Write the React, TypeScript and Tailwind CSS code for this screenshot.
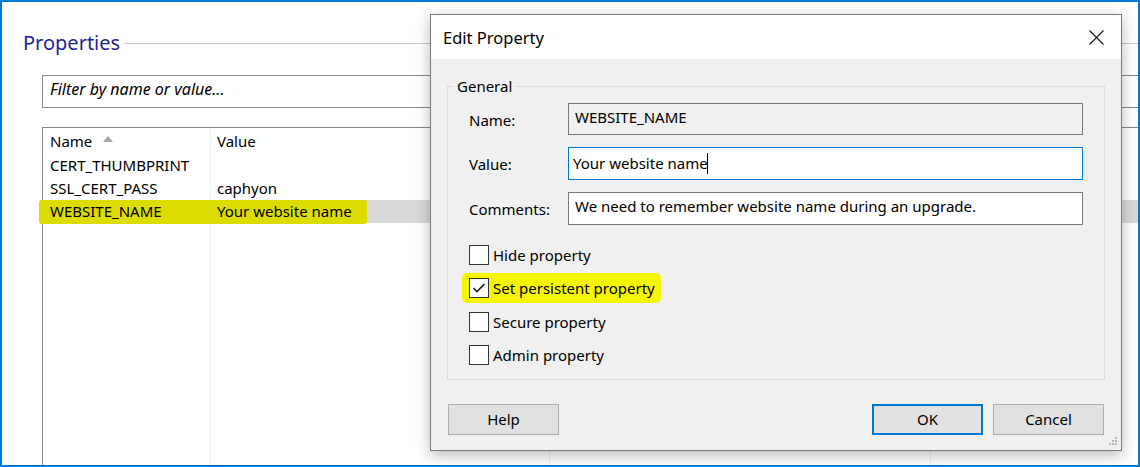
import React from "react";

const font = { fontFamily: '"Noto Sans", "Open Sans", sans-serif' };

function Check({ checked }: { checked?: boolean }) {
  return (
    <div className="w-[20px] h-[20px] border border-[#333333] bg-white flex items-center justify-center shrink-0">
      {checked && (
        <svg width="14" height="12" viewBox="0 0 14 12">
          <polyline points="1.5,6 5,9.5 12.5,2" fill="none" stroke="#1a1a1a" strokeWidth="1.6" />
        </svg>
      )}
    </div>
  );
}

export default function App() {
  return (
    <div
      className="w-[1140px] h-[467px] border-2 border-[#0078d7] bg-white relative overflow-hidden text-[15px] text-black"
      style={font}
    >
      {/* Background page */}
      <div className="flex flex-col h-full">
        <div className="flex items-center pl-[21px] pt-[27px] h-[54px]">
          <span className="text-[20px] leading-[26px] text-[#1f1f9c] pr-[4px]">Properties</span>
          <div className="flex-1 h-px bg-[#c8c8c8] mt-[2px]" />
        </div>
        <div className="ml-[40px] mt-[19px] h-[33px] border-l border-t border-b border-[#828790] flex items-center pl-[7px] pb-[6px]">
          <span className="italic text-[16px] leading-none">Filter by name or value...</span>
        </div>
        <div className="ml-[40px] mt-[19px] flex-1 border-l border-t border-[#828790] relative">
          <div className="absolute top-0 bottom-0 left-[167px] w-px bg-[#e8eef8]" />
          <div className="absolute top-0 bottom-0 left-[506px] w-px bg-[#e8eef8]" />
          <div className="absolute top-0 bottom-0 left-[887px] w-px bg-[#e8eef8]" />
          <div className="flex h-[26px] items-center">
            <div className="w-[168px] pl-[7px] flex items-center">
              <span>Name</span>
              <svg width="10" height="6" viewBox="0 0 10 6" className="ml-[11px] -mt-[4px]">
                <polygon points="5,0 10,6 0,6" fill="#a8a8a0" />
              </svg>
            </div>
            <div className="pl-[6px]">Value</div>
          </div>
          <div className="flex h-[23px] items-center">
            <div className="w-[168px] pl-[7px]">CERT_THUMBPRINT</div>
          </div>
          <div className="flex h-[23px] items-center">
            <div className="w-[168px] pl-[7px]">SSL_CERT_PASS</div>
            <div className="pl-[6px]">caphyon</div>
          </div>
          <div className="relative flex h-[23px] items-center bg-[#d9d9d9]">
            <div className="absolute -left-[4px] top-0 h-[24px] w-[328px] rounded-[3px] bg-[#dcdc00]" />
            <div className="relative w-[168px] pl-[7px]">WEBSITE_NAME</div>
            <div className="relative pl-[6px]">Your website name</div>
          </div>
        </div>
      </div>

      {/* Dialog */}
      <div className="absolute left-[428px] top-[12px] w-[692px] h-[437px] border border-[#7a7a7a] bg-[#f0f0f0] flex flex-col shadow-[0_4px_14px_rgba(0,0,0,0.28)]">
        <div className="h-[44px] bg-white flex items-center justify-between pl-[12px] pr-[17px] shrink-0">
          <span className="text-[16.5px] pt-[2px]">Edit Property</span>
          <svg width="15" height="15" viewBox="0 0 15 15">
            <path d="M0.5 0.5 L14.5 14.5 M14.5 0.5 L0.5 14.5" stroke="#111" strokeWidth="1.1" />
          </svg>
        </div>
        <fieldset className="mx-[16px] mt-[18px] h-[303px] border border-[#dcdcdc] p-0">
          <legend className="ml-[6px] px-[3px] leading-[18px]">General</legend>
          <div className="flex flex-col mt-[8px] px-[21px]">
            <div className="flex items-center h-[32px]">
              <span className="w-[99px] pt-[3px]">Name:</span>
              <div className="flex-1 h-[32px] border border-[#7a7a7a] bg-[#f0f0f0] pl-[6px] flex items-start pt-[2px]">
                WEBSITE_NAME
              </div>
            </div>
            <div className="flex items-center h-[33px] mt-[12px]">
              <span className="w-[99px] pt-[2px]">Value:</span>
              <div className="flex-1 h-[33px] border border-[#0078d7] bg-white pl-[4px] flex items-center">
                <span>Your website name</span>
                <span className="w-px h-[21px] bg-black ml-[-1px]" />
              </div>
            </div>
            <div className="flex items-center h-[33px] mt-[12px]">
              <span className="w-[99px] pt-[2px]">Comments:</span>
              <div className="flex-1 h-[33px] border border-[#7a7a7a] bg-white pl-[6px] flex items-start pt-[2px]">
                We need to remember website name during an upgrade.
              </div>
            </div>
            <div className="flex flex-col mt-[20px] gap-[13.4px]">
              <div className="flex items-center h-[20px] gap-[4px]">
                <Check />
                <span>Hide property</span>
              </div>
              <div className="relative flex items-center h-[20px] gap-[4px]">
                <div className="absolute -left-[7px] -top-[5px] w-[199px] h-[30px] rounded-[5px] bg-[#f5f500]" />
                <div className="relative flex items-center gap-[4px]">
                  <Check checked />
                  <span>Set persistent property</span>
                </div>
              </div>
              <div className="flex items-center h-[20px] gap-[4px]">
                <Check />
                <span>Secure property</span>
              </div>
              <div className="flex items-center h-[20px] gap-[4px]">
                <Check />
                <span>Admin property</span>
              </div>
            </div>
          </div>
        </fieldset>
        <div className="flex items-center mx-[17px] mt-[24px]">
          <button className="w-[111px] h-[31px] bg-[#e1e1e1] border border-[#adadad]">Help</button>
          <div className="flex-1" />
          <button className="w-[111px] h-[31px] bg-[#e1e1e1] border-2 border-[#0078d7]">OK</button>
          <button className="w-[111px] h-[31px] bg-[#e1e1e1] border border-[#adadad] ml-[10px]">Cancel</button>
        </div>
        <svg width="10" height="10" viewBox="0 0 10 10" className="absolute right-[3px] bottom-[3px]">
          <rect x="7" y="0" width="2" height="2" fill="#b5b5b5" />
          <rect x="4" y="3" width="2" height="2" fill="#b5b5b5" />
          <rect x="7" y="3" width="2" height="2" fill="#b5b5b5" />
          <rect x="1" y="6" width="2" height="2" fill="#b5b5b5" />
          <rect x="4" y="6" width="2" height="2" fill="#b5b5b5" />
          <rect x="7" y="6" width="2" height="2" fill="#b5b5b5" />
        </svg>
      </div>
    </div>
  );
}
